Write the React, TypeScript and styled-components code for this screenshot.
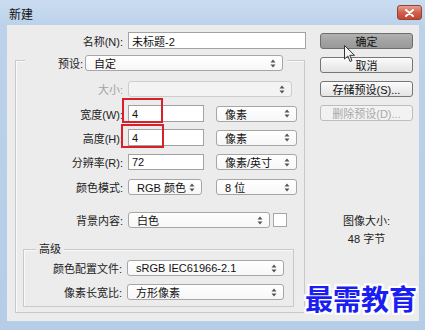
import React from "react";
import styled, { createGlobalStyle, css } from "styled-components";

const Global = createGlobalStyle`
  html, body { margin: 0; padding: 0; background: #fff; }
  body {
    font-family: "Liberation Sans", "Noto Sans CJK SC", sans-serif;
    font-size: 11px;
    color: #1e1e1e;
  }
  * { box-sizing: border-box; }
`;

const Window = styled.div`
  position: relative;
  width: 425px;
  height: 330px;
  overflow: hidden;
  background: linear-gradient(#cadcf0, #bcd2ea 26px, #b6cde8);
  display: flex;
  flex-direction: column;
`;

const TitleBar = styled.div`
  height: 25px;
  flex: none;
  display: flex;
  align-items: flex-start;
  justify-content: space-between;
  padding: 0 3px 0 9px;
`;

const Title = styled.span`
  margin-top: 8px;
  line-height: 14px;
  font-size: 12px;
  color: #111;
`;

const CloseBtn = styled.div`
  margin-top: 5px;
  width: 25px;
  height: 15px;
  border: 1px solid #8f4438;
  border-radius: 3px;
  background: linear-gradient(#e6a090, #d2604c 50%, #c44632);
  display: flex;
  align-items: center;
  justify-content: center;
`;

const Client = styled.div`
  flex: 1;
  margin: 0 6px 9px 7px;
  background: #ececec;
  display: flex;
  padding-left: 8px;
`;

const LeftCol = styled.div`
  width: 291px;
  display: flex;
  flex-direction: column;
`;

const RightCol = styled.div`
  margin-left: 14px;
  width: 93px;
  padding-top: 8px;
  display: flex;
  flex-direction: column;
  gap: 8px;
`;

const Row = styled.div<{ $mt: number }>`
  display: flex;
  align-items: center;
  gap: 5px;
  margin-top: ${(p) => p.$mt}px;
`;

const Label = styled.span<{ $w: number; $disabled?: boolean }>`
  width: ${(p) => p.$w}px;
  text-align: right;
  white-space: nowrap;
  color: ${(p) => (p.$disabled ? "#a3a3a3" : "#222")};
`;

const InputWrap = styled.div`
  position: relative;
`;

const TextBox = styled.div<{ $w: number; $h?: number }>`
  width: ${(p) => p.$w}px;
  height: ${(p) => p.$h ?? 16}px;
  border: 1px solid #a2a2a2;
  background: #fff;
  padding-left: 3px;
  display: flex;
  align-items: center;
  color: #111;
`;

const Highlight = styled.div<{ $l: number; $t: number; $w: number; $h: number }>`
  position: absolute;
  left: ${(p) => p.$l}px;
  top: ${(p) => p.$t}px;
  width: ${(p) => p.$w}px;
  height: ${(p) => p.$h}px;
  border: 2px solid #d8202a;
  pointer-events: none;
`;

const SelectBox = styled.div<{ $w: number; $disabled?: boolean }>`
  width: ${(p) => p.$w}px;
  height: 16px;
  border: 1px solid ${(p) => (p.$disabled ? "#cdcdcd" : "#a6a6a6")};
  border-radius: 3px;
  background: ${(p) =>
    p.$disabled ? "#f3f3f3" : "linear-gradient(#ffffff, #f7f7f7)"};
  display: flex;
  align-items: center;
  justify-content: space-between;
  padding: 0 6px 0 8px;
  color: #111;
  white-space: nowrap;
`;

const Swatch = styled.div`
  width: 14px;
  height: 14px;
  border: 1px solid #a6a6a6;
  background: #fff;
  margin-left: -2px;
`;

const GroupBox = styled.div`
  margin-top: 11px;
  width: 290px;
  border: 1px solid #c9c9c9;
  box-shadow: inset 1px 1px 0 #fafafa;
  display: flex;
  flex-direction: column;
  padding-bottom: 5px;
`;

const LegendRow = styled.div`
  margin: -6px 0 0 9px;
  width: 262px;
  height: 16px;
  background: #ececec;
  display: flex;
  align-items: center;
  gap: 2px;
`;

const SubGroup = styled.div`
  margin: 21px 0 0 7px;
  width: 271px;
  border: 1px solid #c9c9c9;
  box-shadow: inset 1px 1px 0 #fafafa;
  display: flex;
  flex-direction: column;
  padding-bottom: 6px;
`;

const SubLegend = styled.span`
  align-self: flex-start;
  margin: -8px 0 0 12px;
  padding: 0 3px;
  line-height: 14px;
  background: #ececec;
  color: #222;
`;

const Button = styled.div<{ $variant?: "default" | "focus" | "disabled" }>`
  height: 16px;
  border: 1px solid #767676;
  border-radius: 3px;
  background: linear-gradient(#fbfbfb, #efefef 50%, #e4e4e4);
  display: flex;
  align-items: center;
  justify-content: center;
  color: #111;
  white-space: nowrap;
  ${(p) =>
    p.$variant === "focus" &&
    css`
      background: linear-gradient(#b2b2b2, #a2a2a2 50%, #999);
      border-color: #6e6e6e;
    `}
  ${(p) =>
    p.$variant === "disabled" &&
    css`
      color: #a8a8a8;
      border-color: #bdbdbd;
      background: #f2f2f2;
    `}
`;

const Info = styled.div`
  margin-top: 83px;
  text-align: center;
  line-height: 18px;
  color: #222;
`;

const Watermark = styled.div`
  position: absolute;
  left: 305px;
  top: 283px;
  font-family: "Noto Sans CJK SC", sans-serif;
  font-weight: 700;
  font-size: 28px;
  line-height: 30px;
  color: #1a1ef0;
  text-shadow: -2px 0 0 #fff, 2px 0 0 #fff, 0 -2px 0 #fff, 0 2px 0 #fff,
    -2px -2px 0 #fff, 2px 2px 0 #fff, -2px 2px 0 #fff, 2px -2px 0 #fff;
`;

const Cursor = styled.svg`
  position: absolute;
  left: 344px;
  top: 45px;
`;

const Arrows = () => (
  <svg width="6" height="9" viewBox="0 0 6 9">
    <path d="M3 0.5 L5.5 3.5 H0.5 Z M3 8.5 L5.5 5.5 H0.5 Z" fill="#555" />
  </svg>
);

const Select = ({
  w,
  text,
  disabled,
}: {
  w: number;
  text?: string;
  disabled?: boolean;
}) => (
  <SelectBox $w={w} $disabled={disabled}>
    <span>{text ?? ""}</span>
    <Arrows />
  </SelectBox>
);

export default function App() {
  return (
    <>
      <Global />
      <Window>
        <TitleBar>
          <Title>新建</Title>
          <CloseBtn>
            <svg width="9" height="8" viewBox="0 0 9 8">
              <path
                d="M1 1 L8 7 M8 1 L1 7"
                stroke="#fff"
                strokeWidth="2"
                strokeLinecap="round"
              />
            </svg>
          </CloseBtn>
        </TitleBar>
        <Client>
          <LeftCol>
            <Row $mt={7}>
              <Label $w={108}>名称(N):</Label>
              <TextBox $w={178} $h={17}>
                未标题-2
              </TextBox>
            </Row>
            <GroupBox>
              <LegendRow>
                <Label $w={58}>预设:</Label>
                <Select w={198} text="自定" />
              </LegendRow>
              <Row $mt={10}>
                <Label $w={107} $disabled>
                  大小:
                </Label>
                <Select w={164} disabled />
              </Row>
              <Row $mt={8}>
                <Label $w={107}>宽度(W):</Label>
                <InputWrap>
                  <TextBox $w={76} $h={17}>
                    4
                  </TextBox>
                  <Highlight $l={-6} $t={-7} $w={41} $h={25} />
                </InputWrap>
                <Label $w={2} />
                <Select w={81} text="像素" />
              </Row>
              <Row $mt={7}>
                <Label $w={107}>高度(H):</Label>
                <InputWrap>
                  <TextBox $w={76} $h={17}>
                    4
                  </TextBox>
                  <Highlight $l={-7} $t={-5} $w={43} $h={24} />
                </InputWrap>
                <Label $w={2} />
                <Select w={81} text="像素" />
              </Row>
              <Row $mt={8}>
                <Label $w={107}>分辨率(R):</Label>
                <TextBox $w={76}>72</TextBox>
                <Label $w={2} />
                <Select w={81} text="像素/英寸" />
              </Row>
              <Row $mt={9}>
                <Label $w={107}>颜色模式:</Label>
                <Select w={74} text="RGB 颜色" />
                <Label $w={4} />
                <Select w={81} text="8 位" />
              </Row>
              <Row $mt={17}>
                <Label $w={107}>背景内容:</Label>
                <Select w={142} text="白色" />
                <Swatch />
              </Row>
              <SubGroup>
                <SubLegend>高级</SubLegend>
                <Row $mt={4}>
                  <Label $w={98}>颜色配置文件:</Label>
                  <Select w={157} text="sRGB IEC61966-2.1" />
                </Row>
                <Row $mt={8}>
                  <Label $w={98}>像素长宽比:</Label>
                  <Select w={157} text="方形像素" />
                </Row>
              </SubGroup>
            </GroupBox>
          </LeftCol>
          <RightCol>
            <Button $variant="focus">确定</Button>
            <Button>取消</Button>
            <Button>存储预设(S)...</Button>
            <Button $variant="disabled">删除预设(D)...</Button>
            <Info>
              <div>图像大小:</div>
              <div>48 字节</div>
            </Info>
          </RightCol>
        </Client>
        <Cursor width="12" height="18" viewBox="0 0 12 18">
          <path
            d="M0.5 0.5 L0.5 14 L3.8 11 L6 16.5 L8 15.6 L5.8 10.3 L10.5 10.3 Z"
            fill="#f4f4f4"
            stroke="#333"
            strokeWidth="1"
            strokeLinejoin="round"
          />
        </Cursor>
        <Watermark>最需教育</Watermark>
      </Window>
    </>
  );
}
